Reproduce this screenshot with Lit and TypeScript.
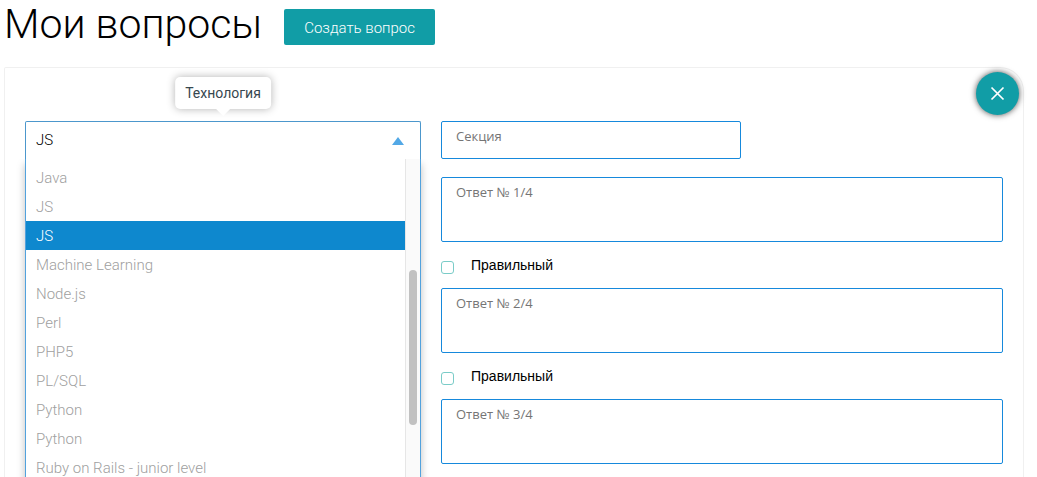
import { LitElement, html, css, nothing } from "lit";
import { customElement, property, state } from "lit/decorators.js";
import { classMap } from "lit/directives/class-map.js";

interface Technology {
  id: number;
  name: string;
}

const TECHNOLOGIES: Technology[] = [
  "Java",
  "JS",
  "JS",
  "Machine Learning",
  "Node.js",
  "Perl",
  "PHP5",
  "PL/SQL",
  "Python",
  "Python",
  "Ruby on Rails - junior level",
].map((name, id) => ({ id, name }));

/** Drop-down with a tooltip above and its list opened below. */
@customElement("tech-select")
export class TechSelect extends LitElement {
  @property() label = "";
  @property({ attribute: false }) options: Technology[] = [];
  @state() private selected = 2;

  static styles = css`
    :host {
      display: block;
      position: relative;
      font: 300 15px/20px Roboto, sans-serif;
    }
    * {
      box-sizing: border-box;
    }
    .control {
      display: block;
      width: 100%;
      height: 38px;
      padding: 0 40px 2px 10px;
      border: 1px solid #4c97cc;
      border-bottom: 0;
      border-radius: 2px 2px 0 0;
      background: #fff;
      color: #000;
      font: inherit;
      appearance: none;
      outline: none;
    }
    .arrow {
      position: absolute;
      top: 16px;
      right: 17px;
      width: 12px;
      height: 8px;
      fill: #52a8e6;
      pointer-events: none;
    }
    .tooltip {
      position: absolute;
      bottom: calc(100% + 12px);
      left: 50%;
      transform: translateX(-50%);
      padding: 6px 10px;
      border-radius: 5px;
      background: #fff;
      color: #37474f;
      font-size: 14px;
      font-weight: 400;
      white-space: nowrap;
      box-shadow: 0 0 8px rgba(0, 0, 0, 0.3);
    }
    .tooltip::after {
      content: "";
      position: absolute;
      top: 100%;
      left: 50%;
      margin-left: -7px;
      border: 7px solid transparent;
      border-top-color: #fff;
      border-bottom: 0;
    }
    .dropdown {
      position: absolute;
      top: 100%;
      left: 0;
      right: 0;
      display: flex;
      border: 1px solid #52a2dd;
      border-top: 0;
      background: #fff;
      box-shadow: 0 5px 8px rgba(0, 0, 0, 0.25);
      clip-path: inset(0 -16px -16px);
    }
    .list {
      flex: 1;
      margin: 0;
      padding: 4px 0;
      list-style: none;
    }
    .option {
      padding: 5px 10px 4px;
      color: #a0a0a0;
      cursor: pointer;
    }
    .option.selected {
      background: #0e88ce;
      color: #fff;
    }
    .track {
      width: 15px;
      padding: 111px 3px 0;
      border-left: 1px solid #e6e6e6;
      background: #fafafa;
    }
    .thumb {
      height: 155px;
      border-radius: 4px;
      background: #c1c1c1;
    }
  `;

  private choose(id: number) {
    this.selected = id;
  }

  render() {
    return html`
      <select
        class="control"
        aria-label=${this.label}
        @change=${(e: Event) => this.choose(Number((e.target as HTMLSelectElement).value))}
      >
        ${this.options.map(
          (o) => html`<option value=${o.id} ?selected=${o.id === this.selected}>${o.name}</option>`
        )}
      </select>
      <svg class="arrow" viewBox="0 0 12 8" aria-hidden="true"><path d="M6 0 12 8H0z" /></svg>
      <div class="tooltip" role="tooltip">${this.label}</div>
      <div class="dropdown">
        <ul class="list" role="listbox" aria-label=${this.label}>
          ${this.options.map(
            (o) => html`<li
              class=${classMap({ option: true, selected: o.id === this.selected })}
              role="option"
              aria-selected=${o.id === this.selected}
              @click=${() => this.choose(o.id)}
            >${o.name}</li>`
          )}
        </ul>
        <div class="track" aria-hidden="true"><div class="thumb"></div></div>
      </div>
    `;
  }
}

/** Answer text, with a "correct" tick box when it can be marked. */
@customElement("answer-field")
export class AnswerField extends LitElement {
  @property({ type: Number }) number = 1;
  @property({ type: Boolean }) markable = false;

  static styles = css`
    :host {
      display: block;
    }
    .answer {
      display: block;
      box-sizing: border-box;
      width: 100%;
      height: 65px;
      padding: 5px 14px;
      border: 1px solid #1689dc;
      border-radius: 2px;
      background: #fff;
      font: 13px/18px "Open Sans", sans-serif;
      resize: none;
      outline: none;
    }
    .answer::placeholder {
      color: #757575;
    }
    .correct {
      display: flex;
      align-items: center;
      gap: 17px;
      height: 46px;
      font: 14px/20px "Liberation Sans", Arial, sans-serif;
      color: #000;
    }
    .tick {
      flex: none;
      width: 13px;
      height: 13px;
      margin: 4px 0 0;
      border: 1px solid #7accc8;
      border-radius: 3px;
      background: #fff;
      appearance: none;
    }
    .tick:checked {
      background: #119da6;
    }
  `;

  render() {
    const hint = `Ответ № ${this.number}/4`;
    return html`
      <textarea class="answer" placeholder=${hint} aria-label=${hint}></textarea>
      ${this.markable
        ? html`<label class="correct"><input class="tick" type="checkbox" /><span>Правильный</span></label>`
        : nothing}
    `;
  }
}

@customElement("app-root")
export class AppRoot extends LitElement {
  static styles = css`
    :host {
      display: flex;
      flex-direction: column;
      box-sizing: border-box;
      height: 100vh;
      padding: 0 13px 0 4px;
      overflow: hidden;
      background: #fff;
      color: #000;
      font-family: Roboto, sans-serif;
    }
    * {
      box-sizing: border-box;
    }
    .header {
      flex: none;
      display: flex;
      align-items: center;
      gap: 22px;
      height: 54px;
      margin-bottom: 13px;
    }
    .title {
      margin: 0;
      padding-bottom: 6px;
      font-size: 41px;
      font-weight: 300;
      line-height: 48px;
    }
    .create {
      height: 36px;
      padding: 2px 20px 0;
      border: 0;
      border-radius: 2px;
      background: #119da6;
      color: #fff;
      font: 300 15px/20px Roboto, sans-serif;
      cursor: pointer;
    }
    .panel {
      position: relative;
      flex: 1 0 auto;
      display: grid;
      grid-template-columns: minmax(0, 396fr) minmax(0, 562fr);
      align-items: start;
      gap: 20px;
      padding: 53px 20px 0;
      border: 1px solid #f0f0f0;
      border-bottom: 0;
      border-radius: 2px 24px 0 0;
    }
    .close {
      position: absolute;
      top: 4px;
      right: 4px;
      display: grid;
      place-items: center;
      width: 43px;
      height: 43px;
      padding: 0;
      border: 0;
      border-radius: 50%;
      background: #119da6;
      box-shadow: 0 0 6px rgba(0, 0, 0, 0.7);
      cursor: pointer;
    }
    .cross {
      width: 15px;
      height: 15px;
      stroke: #fff;
      stroke-width: 1.7;
    }
    .section {
      display: block;
      width: 300px;
      max-width: 100%;
      height: 38px;
      margin-bottom: 18px;
      padding: 0 14px 8px;
      border: 1px solid #1689dc;
      border-radius: 2px;
      background: #fff;
      font: 13px/18px "Open Sans", sans-serif;
      outline: none;
    }
    .section::placeholder {
      color: #757575;
    }
  `;

  render() {
    return html`
      <header class="header">
        <h1 class="title">Мои вопросы</h1>
        <button class="create" type="button">Создать вопрос</button>
      </header>
      <main class="panel">
        <tech-select label="Технология" .options=${TECHNOLOGIES}></tech-select>
        <div>
          <input class="section" type="text" placeholder="Секция" aria-label="Секция" />
          <answer-field number="1" markable></answer-field>
          <answer-field number="2" markable></answer-field>
          <answer-field number="3"></answer-field>
        </div>
        <button class="close" type="button" aria-label="Закрыть">
          <svg class="cross" viewBox="0 0 15 15" aria-hidden="true"><path d="M1.5 1.5l12 12M13.5 1.5l-12 12" /></svg>
        </button>
      </main>
    `;
  }
}
